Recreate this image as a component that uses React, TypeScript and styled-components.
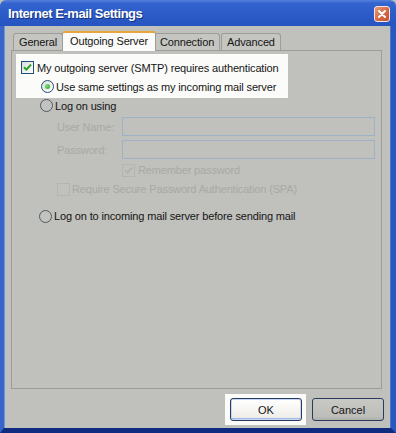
import styled, {createGlobalStyle} from "styled-components";

const TABS = ["General", "Outgoing Server", "Connection", "Advanced"];

const GlobalStyle = createGlobalStyle`
  html, body {
    margin: 0;
    padding: 0;
    background: #c0c0bc;
  }
  body {
    font-family: "Liberation Sans", Arial, sans-serif;
    font-size: 11px;
    letter-spacing: -0.15px;
    color: #151515;
  }
`;

function Check({color}: {color: string}) {
  return (
    <svg width="9" height="9" viewBox="0 0 9 9">
      <path d="M1 4.2 L3.4 6.6 L8 1.6" fill="none" stroke={color} strokeWidth="2"/>
    </svg>
  );
}

function CheckBox({checked, disabled}: {checked?: boolean; disabled?: boolean}) {
  return (
    <Box $disabled={disabled}>
      {checked && <Check color={disabled ? "#b2b2ae" : "#21a321"}/>}
    </Box>
  );
}

function Radio({checked, light}: {checked?: boolean; light?: boolean}) {
  return (
    <RadioCircle $light={light}>
      {checked && <RadioDot/>}
    </RadioCircle>
  );
}

function App() {
  return (
    <>
      <GlobalStyle/>
      <Window>
        <TitleBar>
          <Title>Internet E-mail Settings</Title>
          <CloseButton>
            <svg width="10" height="10" viewBox="0 0 10 10">
              <path d="M2 2 L8 8 M8 2 L2 8" stroke="#fff" strokeWidth="2" strokeLinecap="round"/>
            </svg>
          </CloseButton>
        </TitleBar>
        <Frame>
          <TabRow>
            {TABS.map((tab) =>
              <Tab key={tab} $active={tab === "Outgoing Server"}>{tab}</Tab>
            )}
          </TabRow>
          <Panel>
            <Highlight>
              <Row>
                <CheckBox checked/>
                <Label>My outgoing server (SMTP) requires authentication</Label>
              </Row>
              <Row $indent={20} $gap={2}>
                <Radio checked light/>
                <Label>Use same settings as my incoming mail server</Label>
              </Row>
            </Highlight>
            <Row $indent={28} $gap={2} $height={15}>
              <Radio/>
              <Label>Log on using</Label>
            </Row>
            <FieldGrid>
              <Label $disabled>User Name:</Label>
              <Input/>
              <Label $disabled>Password:</Label>
              <Input/>
            </FieldGrid>
            <Row $indent={110} $height={16} $top={3}>
              <CheckBox checked disabled/>
              <Label $disabled>Remember password</Label>
            </Row>
            <Row $indent={45} $height={16} $top={3} $gap={2}>
              <CheckBox disabled/>
              <Label $disabled>Require Secure Password Authentication (SPA)</Label>
            </Row>
            <Row $indent={27} $height={16} $top={11} $gap={2}>
              <Radio/>
              <Label>Log on to incoming mail server before sending mail</Label>
            </Row>
          </Panel>
          <Footer>
            <ButtonHighlight>
              <Button $focused>OK</Button>
            </ButtonHighlight>
            <Button>Cancel</Button>
          </Footer>
        </Frame>
      </Window>
    </>
  );
}

export default App;

const Window = styled.div`
  width: 396px;
  height: 433px;
  display: flex;
  flex-direction: column;
  background: #c0c0bc;
  overflow: hidden;
`;

const TitleBar = styled.div`
  height: 26px;
  flex-shrink: 0;
  box-sizing: border-box;
  display: flex;
  align-items: center;
  justify-content: space-between;
  padding: 1px 6px 0 8px;
  border-radius: 6px 6px 0 0;
  background: linear-gradient(#5580dc 0%, #3364cf 12%, #2c5bc8 55%, #2654c0 100%);
`;

const Title = styled.div`
  color: #fff;
  font-weight: bold;
  font-size: 13px;
  letter-spacing: -0.45px;
  text-shadow: 1px 1px 0 #14307a;
`;

const CloseButton = styled.div`
  width: 16px;
  height: 16px;
  box-sizing: border-box;
  display: flex;
  align-items: center;
  justify-content: center;
  border: 1px solid #f2e6e0;
  border-radius: 3px;
  background: linear-gradient(135deg, #e99a78, #d4643f 60%, #c4552f);
`;

const Frame = styled.div`
  flex: 1;
  display: flex;
  flex-direction: column;
  border-left: 4px solid #3a65c8;
  border-right: 5px solid #2a56bf;
  border-bottom: 5px solid #0e2b80;
  box-shadow: inset 1px 0 0 #6f93dc, inset -1px 0 0 #4b73cc;
`;

const TabRow = styled.div`
  display: flex;
  align-items: flex-end;
  padding: 5px 0 0 9px;
`;

const Tab = styled.div<{$active?: boolean}>`
  position: relative;
  box-sizing: border-box;
  display: flex;
  align-items: center;
  height: ${(p) => (p.$active ? "20px" : "17px")};
  margin: ${(p) => (p.$active ? "0 -2px -1px" : "0 1px 0 0")};
  padding: ${(p) => (p.$active ? "0 7px 2px" : "0 5px")};
  border: 1px solid #9c9c98;
  border-bottom: none;
  border-top: ${(p) => (p.$active ? "2px solid #e9a63e" : "1px solid #9c9c98")};
  border-radius: 3px 3px 0 0;
  background: ${(p) => (p.$active ? "#fbfbf9" : "#c5c5c1")};
  z-index: ${(p) => (p.$active ? 2 : 1)};
  white-space: nowrap;
`;

const Panel = styled.div`
  flex: 1;
  display: flex;
  flex-direction: column;
  margin: 0 9px 0 7px;
  padding-top: 3px;
  border: 1px solid #9c9c98;
`;

const Highlight = styled.div`
  width: 272px;
  box-sizing: border-box;
  display: flex;
  flex-direction: column;
  margin-left: 4px;
  padding: 4px 0 2px 5px;
  background: #fbfbf9;
`;

const Row = styled.div<{$indent?: number; $height?: number; $top?: number; $gap?: number}>`
  display: flex;
  align-items: center;
  gap: ${(p) => p.$gap ?? 3}px;
  height: ${(p) => p.$height ?? 19}px;
  margin-top: ${(p) => p.$top ?? 0}px;
  padding-left: ${(p) => p.$indent ?? 0}px;
  white-space: nowrap;
`;

const Label = styled.span<{$disabled?: boolean}>`
  color: ${(p) => (p.$disabled ? "#a9a9a5" : "#151515")};
`;

const Box = styled.div<{$disabled?: boolean}>`
  width: 13px;
  height: 13px;
  box-sizing: border-box;
  flex-shrink: 0;
  display: flex;
  align-items: center;
  justify-content: center;
  border: 1px solid ${(p) => (p.$disabled ? "#b4b4b0" : "#1f4f7e")};
  background: ${(p) => (p.$disabled ? "#c0c0bc" : "linear-gradient(135deg, #dcdcd6, #ffffff)")};
`;

const RadioCircle = styled.div<{$light?: boolean}>`
  width: 13px;
  height: 13px;
  box-sizing: border-box;
  flex-shrink: 0;
  display: flex;
  align-items: center;
  justify-content: center;
  border-radius: 50%;
  border: 1px solid ${(p) => (p.$light ? "#1f4f7e" : "#4e5a66")};
  background: ${(p) => (p.$light ? "linear-gradient(135deg, #dcdcd6, #ffffff)" : "#c2c2be")};
`;

const RadioDot = styled.div`
  width: 5px;
  height: 5px;
  border-radius: 50%;
  background: radial-gradient(circle at 35% 35%, #7fe07f, #22a022);
`;

const FieldGrid = styled.div`
  display: grid;
  grid-template-columns: 65px 253px;
  row-gap: 4px;
  align-items: center;
  margin: 4px 0 0 45px;
`;

const Input = styled.div`
  height: 19px;
  box-sizing: border-box;
  border: 1px solid #9fb1c6;
  background: #c0c0bc;
`;

const Footer = styled.div`
  display: flex;
  justify-content: flex-end;
  align-items: center;
  gap: 6px;
  padding: 5px 7px 3px 0;
`;

const ButtonHighlight = styled.div`
  display: flex;
  padding: 4px 4px 4px 5px;
  background: #fbfbf9;
`;

const Button = styled.button<{$focused?: boolean}>`
  width: 72px;
  height: 23px;
  box-sizing: border-box;
  padding: 0;
  font-family: "Liberation Sans", Arial, sans-serif;
  font-size: 11px;
  color: #151515;
  border: 1px solid #2a3a5c;
  border-radius: 3px;
  background: ${(p) => (p.$focused
    ? "linear-gradient(#ffffff, #f0efea 85%, #d8d7d0)"
    : "linear-gradient(#c8c8c4, #bdbdb9 85%, #acaca8)")};
  box-shadow: ${(p) => (p.$focused ? "inset 0 0 0 1px #c6d7f3, inset 0 -1px 0 1px #a4bbe8" : "none")};
`;
